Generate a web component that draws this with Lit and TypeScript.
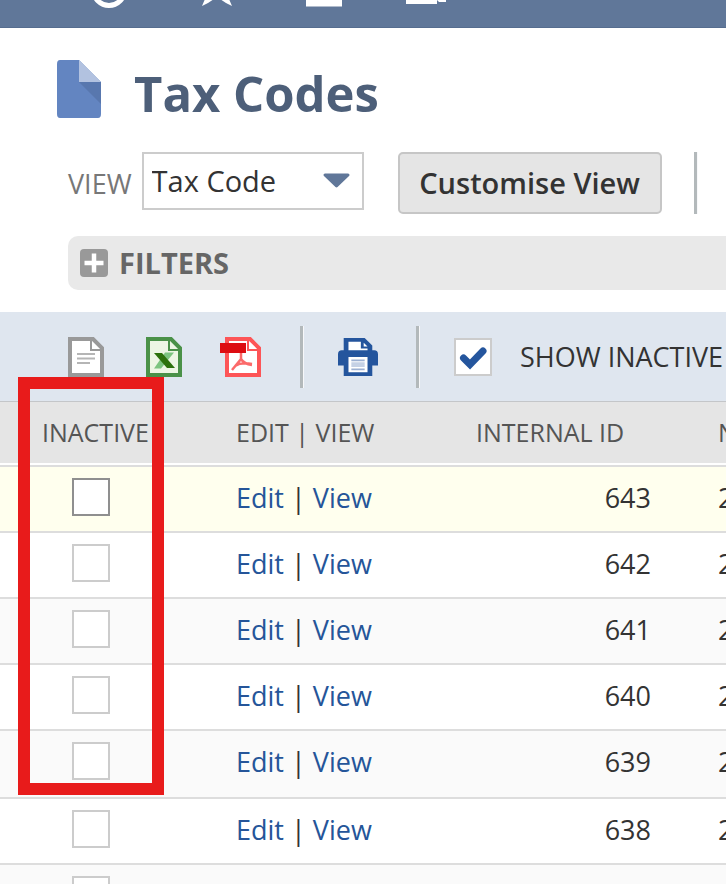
import { LitElement, html, svg, css } from "lit";
import { customElement, state } from "lit/decorators.js";

interface TaxCode {
  id: string;
  name: string;
}

const rows: TaxCode[] = [
  { id: "643", name: "2" },
  { id: "642", name: "2" },
  { id: "641", name: "2" },
  { id: "640", name: "2" },
  { id: "639", name: "2" },
  { id: "638", name: "2" },
];

const page = (stroke: string, fill: string) => svg`
  <path d="M2 2H25L34 11V38H2Z" fill=${fill} stroke=${stroke} stroke-width="4"/>
  <path d="M23 3V13H34" fill="none" stroke=${stroke} stroke-width="2"/>`;

@customElement("app-root")
export class AppRoot extends LitElement {
  @state() private showInactive = true;

  static styles = css`
    :host {
      display: block;
      height: 100vh;
      overflow: hidden;
      background: #fff;
      color: #333;
      font-family: "Open Sans", "Noto Sans", sans-serif;
      font-size: 27px;
      line-height: 40px;
    }
    * { box-sizing: border-box; }
    button { font: inherit; color: inherit; cursor: pointer; }
    svg { display: block; flex: none; }
    .topbar {
      height: 28px;
      background: #607799;
      border-bottom: 1px solid #566d8f;
      display: flex;
      align-items: flex-start;
      gap: 64px;
      padding-left: 88px;
    }
    .topbar a { display: block; }
    .title { display: flex; align-items: flex-start; gap: 32px; padding: 32px 0 0 56px; }
    h1 { margin: 0; padding-top: 4px; font-size: 49px; line-height: 58px; font-weight: 700; color: #4d5f79; }
    .controls {
      display: flex;
      align-items: flex-start;
      margin-top: 30px;
      padding-left: 68px;
    }
    .view { display: flex; align-items: center; gap: 10px; color: #777; }
    .view > span:first-child { padding-top: 6px; }
    .picker { display: grid; width: 222px; height: 58px; align-items: center; }
    .picker > * { grid-area: 1 / 1; }
    .picker svg { justify-self: end; margin-right: 12px; pointer-events: none; }
    select {
      appearance: none;
      width: 100%;
      height: 100%;
      border: 2px solid #ccc;
      border-radius: 0;
      background: #fff;
      color: #333;
      font: inherit;
      font-size: 29px;
      padding: 0 40px 0 8px;
    }
    .customise {
      height: 62px;
      width: 264px;
      margin-left: 34px;
      padding: 0;
      border: 2px solid #c6c6c6;
      border-radius: 5px;
      background: #e5e5e5;
      font-size: 29px;
      font-weight: 600;
    }
    .rule { width: 4px; height: 62px; border-left: 3px solid #b3b9bb; border-right: 1px solid #f7f8fa; }
    .controls .rule { margin-left: 32px; }
    .filters {
      display: flex;
      align-items: center;
      gap: 11px;
      height: 54px;
      width: calc(100% - 68px);
      margin: 22px 0 0 68px;
      padding: 0 12px;
      border: 0;
      border-radius: 10px 0 0 10px;
      background: #e9e9e9;
      color: #666;
      font-size: 29px;
      font-weight: 700;
    }
    .toolbar {
      display: flex;
      align-items: center;
      height: 89px;
      margin-top: 22px;
      padding-left: 68px;
      background: #dfe6ef;
      white-space: nowrap;
    }
    .tool { border: 0; background: none; padding: 0; margin-right: 38px; }
    .toolbar .rule { margin-right: 34px; }
    .inactive { display: flex; align-items: center; gap: 28px; }
    .tick { display: grid; place-items: center; }
    .tick > * { grid-area: 1 / 1; }
    .tick svg { pointer-events: none; }
    input {
      appearance: none;
      display: block;
      margin: 0;
      width: 38px;
      height: 38px;
      background: #fff;
      border: 2px solid #ccc;
    }
    .list { position: relative; }
    table { width: 100%; table-layout: fixed; border-collapse: separate; border-spacing: 0; }
    .c1 { width: 225px; }
    .c2 { width: 240px; }
    .c3 { width: 242px; }
    th, td { text-align: left; white-space: nowrap; overflow: hidden; padding: 0 0 0 11px; }
    th {
      height: 62px;
      padding-bottom: 2px;
      border-top: 1px solid #c4c6c9;
      background: #e5e5e5;
      color: #555;
      font-size: 25px;
      font-weight: 400;
    }
    th:first-child { padding-left: 42px; }
    .gap td { height: 4px; border-bottom: 2px solid #ddd; }
    .data td { height: 66px; padding-top: 11px; vertical-align: top; border-bottom: 2px solid #ddd; }
    .data:nth-child(odd) td { background: #fafafa; }
    .data:nth-child(5) td { height: 68px; }
    .data td:first-child { padding-left: 72px; }
    .data td.id { text-align: right; padding-right: 56px; }
    .data:first-child td { background: #ffffee; }
    .data:first-child input { border-color: #8f8f8f; }
    td a { color: #255599; text-decoration: none; }
    .highlight {
      position: absolute;
      left: 18px;
      top: -24px;
      width: 146px;
      height: 418px;
      border: 12px solid #e81b1b;
      pointer-events: none;
    }
  `;

  private row(r?: TaxCode) {
    return html`<tr class="data">
      <td><input type="checkbox" aria-label="Inactive" /></td>
      <td>${r ? html`<a href="#">Edit</a> | <a href="#">View</a>` : ""}</td>
      <td class="id">${r?.id}</td>
      <td>${r?.name}</td>
    </tr>`;
  }

  render() {
    return html`
      <nav class="topbar">
        <a href="#" aria-label="Recent"><svg width="42" height="10"><circle cx="21" cy="-10" r="15.500" fill="none" stroke="#fff" stroke-width="5"/></svg></a>
        <a href="#" aria-label="Favourites"><svg width="46" height="10"><path d="M8 6L11 -1H20L14 3ZM38 6L35 -1H26L32 3Z" fill="#fff"/></svg></a>
        <a href="#" aria-label="Home"><svg width="38" height="10"><path d="M2 0H39V6.500H2Z" fill="#fff"/></svg></a>
        <a href="#" aria-label="Create"><svg width="44" height="10"><path d="M0 0H31V4H0ZM31 0H40V2H33Z" fill="#fff"/></svg></a>
      </nav>
      <header class="title">
        <svg width="46" height="60" viewBox="0 0 46 60">
          <path d="M4 0H23L45 22V54Q45 58 42 58H4Q1 58 1 54V4Q1 0 4 0Z" fill="#6385c1"/>
          <path d="M23 22H45V44Z" fill="#5877ae"/>
          <path d="M23 0L45 22H23Z" fill="#b2c2e0"/>
        </svg>
        <h1>Tax Codes</h1>
      </header>
      <div class="controls">
        <label class="view"><span>VIEW</span>
          <span class="picker">
            <select><option>Tax Code</option></select>
            <svg width="30" height="18" viewBox="0 0 30 18"><path d="M3 3H26L14.500 14Z" fill="#607799" stroke="#607799" stroke-width="3" stroke-linejoin="round"/></svg>
          </span>
        </label>
        <button class="customise">Customise View</button>
        <span class="rule"></span>
      </div>
      <button class="filters">
        <svg width="28" height="28" viewBox="0 0 28 28"><rect width="28" height="28" rx="4" fill="#999"/><path d="M14 4.500V23.500M4.500 14H23.500" stroke="#fff" stroke-width="4.500"/></svg>
        FILTERS
      </button>
      <div class="toolbar">
        <button class="tool" aria-label="Export CSV"><svg width="40" height="40" viewBox="0 0 40 40">
          ${page("#999", "#fff")}
          <path d="M9 17H27M9 21.500H27M9 26H22" stroke="#b5b5b5" stroke-width="2"/></svg></button>
        <button class="tool" aria-label="Export Excel"><svg width="36" height="40" viewBox="0 0 36 40">
          ${page("#4a9148", "#edf6e4")}
          <path d="M19 15.500H28L15 31.500H8Z" fill="#7cc47f"/>
          <path d="M8 16H16L29 31H21Z" fill="#2d710c"/></svg></button>
        <button class="tool" aria-label="Export PDF"><svg width="42" height="40" viewBox="0 0 42 40">
          <g transform="translate(5 0)">${page("#fd5557", "#fff")}</g>
          <path d="M21 15V22L12 33M21 22Q24 27 32 28M15 29Q21 25 32 27" fill="none" stroke="#fb6a6a" stroke-width="2.500"/>
          <path d="M0 6H26V16H0Z" fill="#dd0d12"/></svg></button>
        <span class="rule"></span>
        <button class="tool" aria-label="Print"><svg width="40" height="40" viewBox="0 0 42 40" preserveAspectRatio="xMidYMid meet" overflow="visible">
          <path d="M6 0H28L36 8V14H6Z" fill="#24559d"/>
          <path d="M11 4H24V11H31V14H11Z" fill="#fff"/><path d="M27 5V9H31Z" fill="#fff"/>
          <path d="M4 13H38Q42 13 42 17V29H36V40H6V29H0V17Q0 13 4 13Z" fill="#24559d"/>
          <path d="M11 20H31V36H11Z" fill="#fff"/>
          <path d="M14 23.500H28M14 33H28" stroke="#9cb0d2" stroke-width="2"/><path d="M14 28H28" stroke="#c5d1e5" stroke-width="5"/></svg></button>
        <span class="rule"></span>
        <label class="inactive">
          <span class="tick">
            <input type="checkbox" .checked=${this.showInactive}
              @change=${(e: Event) => (this.showInactive = (e.target as HTMLInputElement).checked)} />
            ${this.showInactive
              ? html`<svg width="28" height="26" viewBox="0 0 28 26"><path d="M4.500 14L11 20.500L24 7" fill="none" stroke="#24559d" stroke-width="7" stroke-linecap="round"/></svg>`
              : ""}
          </span>
          SHOW INACTIVE
        </label>
      </div>
      <div class="list">
        <table>
          <colgroup><col class="c1" /><col class="c2" /><col class="c3" /><col /></colgroup>
          <thead>
            <tr><th>INACTIVE</th><th>EDIT | VIEW</th><th>INTERNAL ID</th><th>N</th></tr>
            <tr class="gap"><td colspan="4"></td></tr>
          </thead>
          <tbody>${rows.map((r) => this.row(r))}${this.row()}</tbody>
        </table>
        <div class="highlight"></div>
      </div>
    `;
  }
}
